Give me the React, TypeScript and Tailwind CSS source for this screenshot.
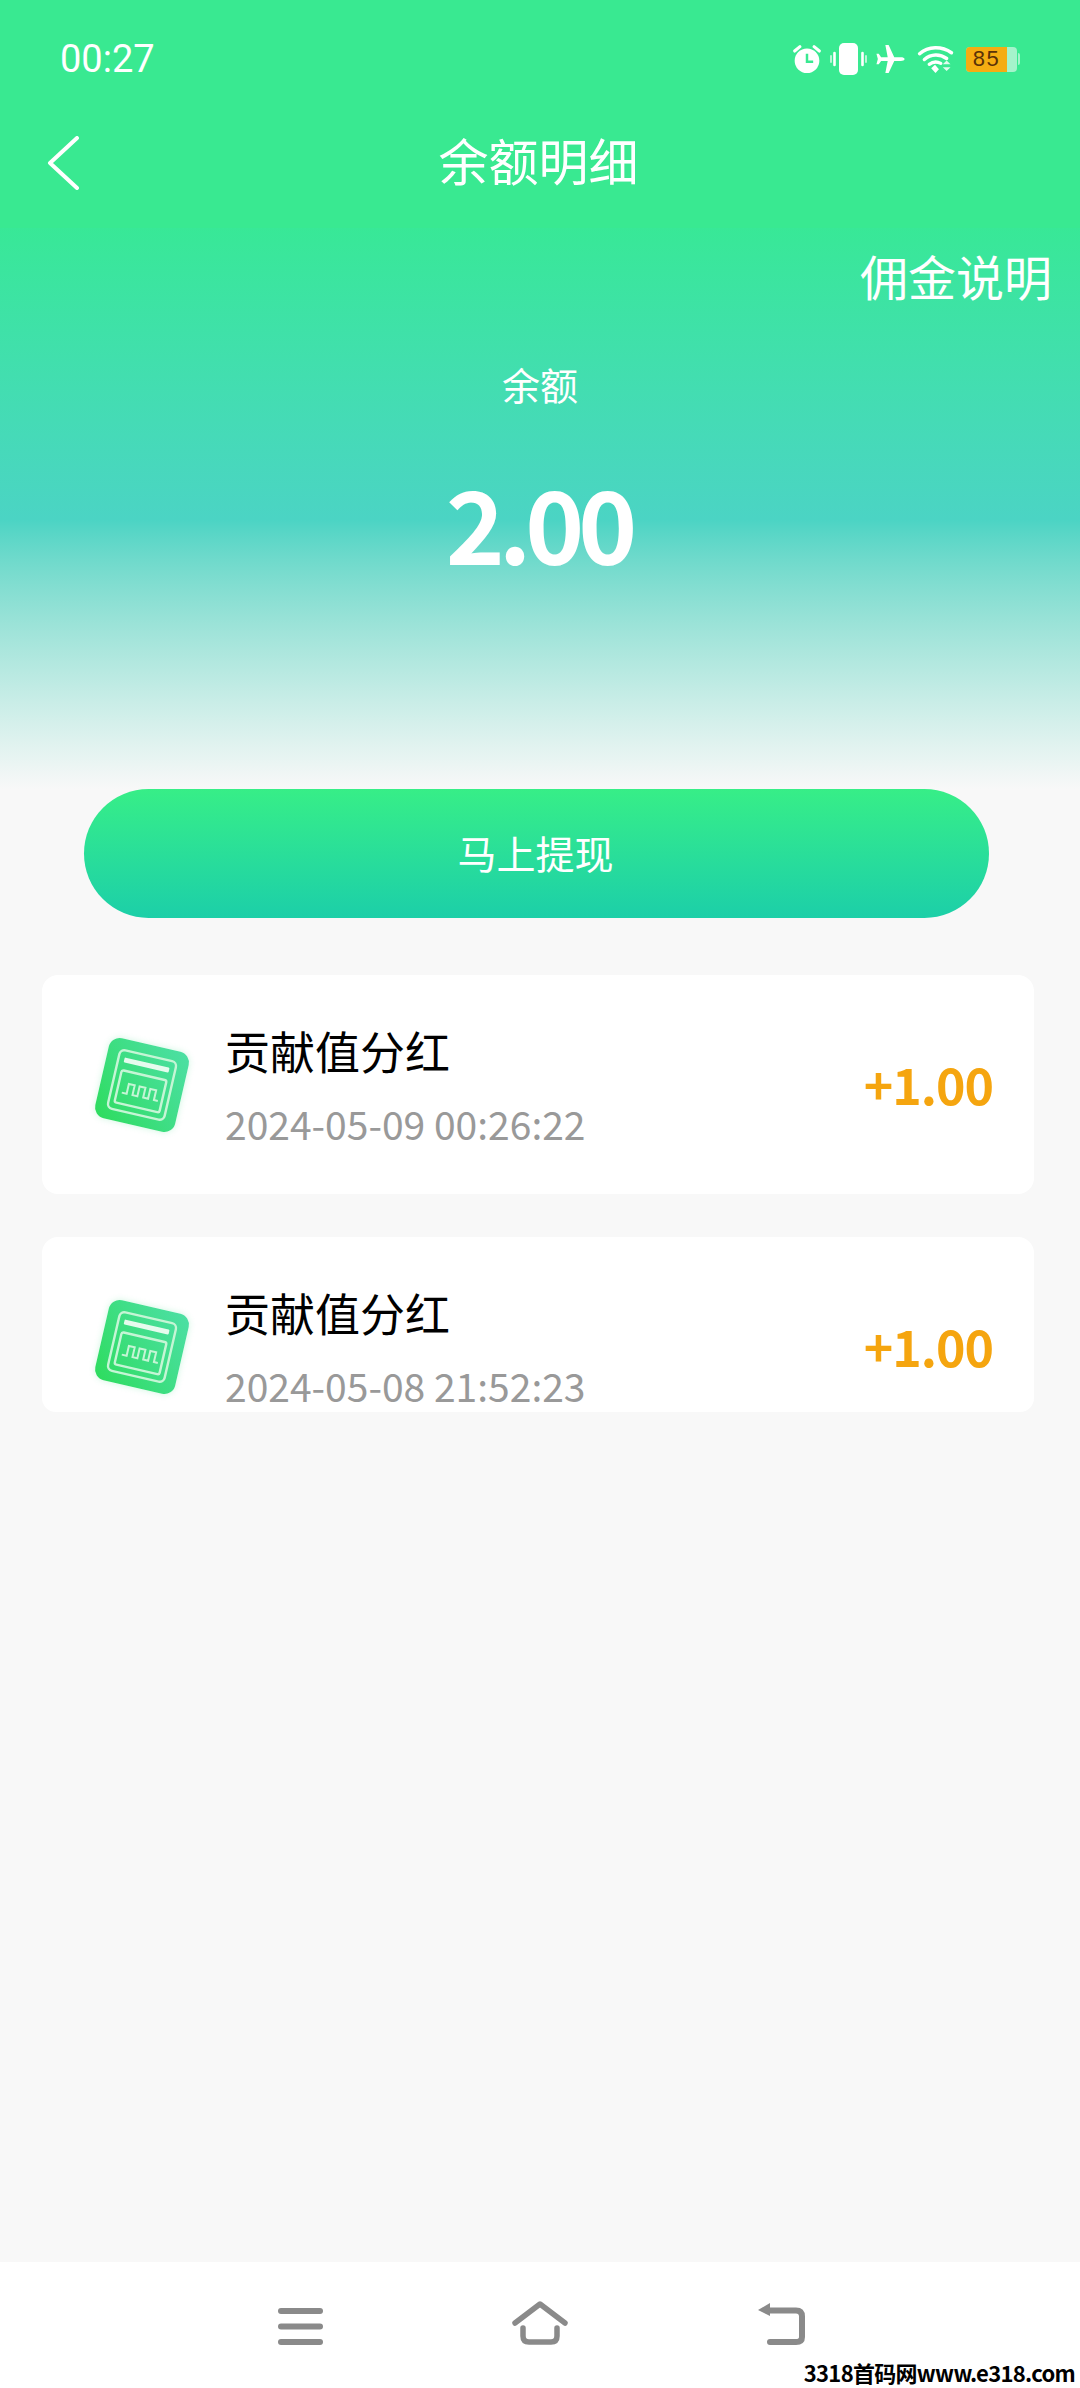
// App.tsx - balance detail page
import React from "react";

interface Record {
    title: string;
    time: string;
    amount: string;
}

const records: Record[] = [
    { title: "贡献值分红", time: "2024-05-09 00:26:22", amount: "+1.00" },
    { title: "贡献值分红", time: "2024-05-08 21:52:23", amount: "+1.00" },
];

const StatusIcons = () => (
    <div className="flex items-center">
        {/* alarm */}
        <svg width="30" height="30" viewBox="0 0 34 34" className="mr-[8px]">
            <circle cx="17" cy="19" r="14" fill="#fff" />
            <path d="M3 8 L9 3 M31 8 L25 3" stroke="#fff" strokeWidth="3.5" strokeLinecap="round" />
            <path d="M17 11 V20 H24" stroke="#39e991" strokeWidth="2.8" fill="none" />
        </svg>
        {/* vibrate */}
        <svg width="37" height="32" viewBox="0 0 37 32" className="mr-[8px]">
            <rect x="9" y="0" width="19" height="32" rx="5" fill="#fff" />
            <path d="M4.5 10 V22 M32.5 10 V22" stroke="#fff" strokeWidth="2.6" strokeLinecap="round" />
            <path d="M1 13 V19 M36 13 V19" stroke="#fff" strokeWidth="1.8" strokeLinecap="round" opacity="0.7" />
        </svg>
        {/* airplane */}
        <svg width="31" height="30" viewBox="0 0 32 32" className="mr-[11px]">
            <path
                d="M31 16 C31 17.5 29 18 27 18 H20 L14 31 H10.5 L13 18 H6 L3.5 21.5 H1 L2.5 16 L1 10.5 H3.5 L6 14 H13 L10.5 1 H14 L20 14 H27 C29 14 31 14.5 31 16 Z"
                fill="#fff"
            />
        </svg>
        {/* wifi */}
        <svg width="38" height="29" viewBox="0 0 38 30" className="mr-[11px]">
            <path d="M2 9 C11 1 25 1 35 8" stroke="#fff" strokeWidth="3.6" fill="none" strokeLinecap="round" />
            <path d="M7 15 C14 9 23 9 30 14" stroke="#fff" strokeWidth="3.6" fill="none" strokeLinecap="round" />
            <path d="M12 20 C16 17 20 17 24 19" stroke="#fff" strokeWidth="3.4" fill="none" strokeLinecap="round" />
            <path d="M14 24 L18 20.5 L22 25 L18.5 29 Z" fill="#fff" />
            <path d="M30 16 L34 20 H26 Z M26 23 H34 L30 27 Z" fill="#fff" opacity="0.85" />
        </svg>
        {/* battery */}
        <div className="flex items-center">
            <div className="flex h-[25px] w-[51px] overflow-hidden rounded-[4px] bg-[#a5f3cb]">
                <div className="flex h-full w-[41px] items-center justify-center bg-[#f5ad12] font-['Liberation_Sans',sans-serif] text-[22px] leading-none tracking-[1.5px] text-[#5a3208]">
                    85
                </div>
            </div>
            <div className="ml-[1px] h-[12px] w-[2px] rounded-r-sm bg-[#a5f3cb]" />
        </div>
    </div>
);

const RecordIcon = () => (
    <div className="h-[82px] w-[82px] shrink-0 rotate-[13deg] rounded-[11px] bg-gradient-to-tr from-[#2ddc5c] to-[#4ddfa5] shadow-[0_0_6px_rgba(60,220,130,0.25)]">
        <svg width="82" height="82" viewBox="0 0 82 82" fill="none">
            <rect x="12" y="11" width="58" height="60" rx="5" stroke="#c5f5d5" strokeWidth="2.4" />
            <rect x="18" y="18" width="46" height="5" rx="1" fill="#e6fbee" />
            <rect x="18" y="31" width="46" height="33" rx="2" stroke="#c5f5d5" strokeWidth="2.4" />
            <path
                d="M23 53 H28 V43 H34 V53 H39 V43 H45 V53 H50 V43 H56 V53 H60"
                stroke="#c5f5d5"
                strokeWidth="2"
            />
        </svg>
    </div>
);

const NavMenu = () => (
    <svg width="45" height="37" viewBox="0 0 45 37" fill="#8a8a8a" className="block">
        <rect x="0" y="0" width="45" height="6" rx="3" />
        <rect x="0" y="15.5" width="45" height="6" rx="3" />
        <rect x="0" y="31" width="45" height="6" rx="3" />
    </svg>
);

const NavHome = () => (
    <svg width="56" height="44" viewBox="0 0 56 44" fill="none" stroke="#8a8a8a" strokeWidth="5.5" strokeLinecap="round" strokeLinejoin="round" className="block">
        <path d="M3 22 L28 3 L53 22" />
        <path d="M11 27 V35 Q11 41 17 41 H39 Q45 41 45 35 V27" />
    </svg>
);

const NavBack = () => (
    <svg width="48" height="42" viewBox="0 0 48 42" fill="none" className="block">
        <path d="M13 0 L13 13 L1 7 Z" fill="#8a8a8a" />
        <path
            d="M10 7.5 H39 Q45 7.5 45 13.5 V34 Q45 39 39 39 H13"
            stroke="#8a8a8a"
            strokeWidth="6"
            strokeLinecap="round"
        />
    </svg>
);

export default function App() {
    return (
        <div className="relative flex h-[2388px] w-[1080px] flex-col overflow-hidden bg-[#f8f8f8] font-['Noto_Sans_CJK_SC','Noto_Sans',sans-serif]">
            {/* status bar + nav */}
            <div className="h-[228px] shrink-0 bg-[#39e991] text-white">
                <div className="flex h-[118px] items-center justify-between pl-[60px] pr-[60px]">
                    <span className="font-['Roboto',sans-serif] text-[38px] leading-none">00:27</span>
                    <StatusIcons />
                </div>
                <div className="relative flex h-[84px] items-center justify-center">
                    <span className="mr-[3px] mt-[-2px] text-[50px] leading-none">余额明细</span>
                    <svg
                        width="34"
                        height="54"
                        viewBox="0 0 34 54"
                        fill="none"
                        className="absolute left-[46px] top-[18px]"
                    >
                        <path d="M31 2 L4 27 L31 52" stroke="#fff" strokeWidth="4" strokeLinecap="round" strokeLinejoin="round" />
                    </svg>
                </div>
            </div>

            {/* balance */}
            <div className="flex h-[561px] shrink-0 flex-col items-center bg-gradient-to-b from-[#38e897] via-[#4bd4c4] via-[52%] to-[#f8f8f8] text-white">
                <div className="mt-[21px] w-full pr-[28px] text-right text-[48px] leading-[52px]">佣金说明</div>
                <div className="mt-[58px] text-[38px] leading-[50px]">余额</div>
                <div className="mt-[53px] pl-[1px] pr-[4px] text-[100px] font-semibold leading-[120px] tracking-[-6px]">2.00</div>
            </div>

            {/* withdraw */}
            <div className="pl-[84px] pr-[91px]">
                <button className="flex h-[129px] w-full items-center justify-center rounded-[65px] bg-gradient-to-b from-[#37ee87] to-[#1ccfa8] pb-[2px] pr-[2px] text-[39px] text-white">
                    马上提现
                </button>
            </div>

            {/* records */}
            <div className="mx-[42px] mt-[57px] flex h-[437px] w-[992px] flex-col gap-[43px] overflow-hidden rounded-[14px]">
                {records.map((item) => (
                    <div
                        key={item.time}
                        className="flex h-[219px] shrink-0 items-center rounded-[16px] bg-white pl-[52px] pr-[41px]"
                    >
                        <div className="ml-[7px] mr-[42px]">
                            <RecordIcon />
                        </div>
                        <div className="flex-1">
                            <div className="text-[45px] leading-[60px] text-black">{item.title}</div>
                            <div className="mt-[17px] text-[39px] leading-[50px] text-[#999]">{item.time}</div>
                        </div>
                        <div className="mb-[3px] text-[50px] font-semibold leading-none tracking-[-1px] text-[#f5a50f]">
                            {item.amount}
                        </div>
                    </div>
                ))}
            </div>

            {/* bottom nav */}
            <div className="mt-auto flex h-[126px] items-end bg-white pb-[43px]">
                <div className="ml-[278px]">
                    <NavMenu />
                </div>
                <div className="ml-[189px]">
                    <NavHome />
                </div>
                <div className="ml-[189px]">
                    <NavBack />
                </div>
            </div>

            {/* watermark */}
            <div className="absolute bottom-0 right-[5px] whitespace-nowrap text-[22px] font-bold leading-[32px] tracking-[-0.7px] text-black [text-shadow:0_0_3px_#fff]">
                3318首码网www.e318.com
            </div>
        </div>
    );
}
